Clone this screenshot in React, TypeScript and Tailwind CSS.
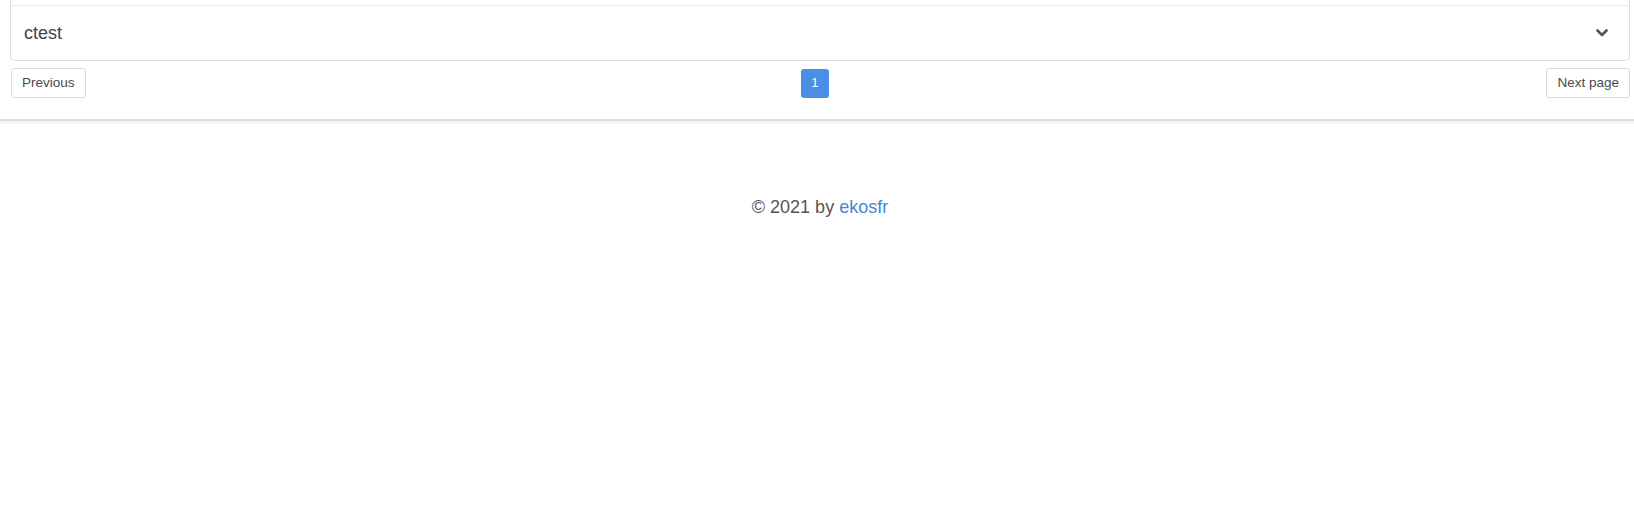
import React from "react";

function Chevron() {
  return (
    <svg width="12" height="8" viewBox="0 0 12 8" className="text-[#555]">
      <path
        d="M1.5 1.5 L6 6 L10.5 1.5"
        fill="none"
        stroke="currentColor"
        strokeWidth="2.6"
        strokeLinecap="round"
        strokeLinejoin="round"
      />
    </svg>
  );
}

function PageButton({ children }: { children: React.ReactNode }) {
  return (
    <button className="h-[30px] px-[10px] rounded-[3px] border border-[#dcdcdc] bg-white text-[13.5px] text-[#4a4a4a]">
      {children}
    </button>
  );
}

export default function App() {
  return (
    <div
      className="w-full h-[512px] bg-white"
      style={{ fontFamily: '"Liberation Sans", Arial, sans-serif' }}
    >
      <div className="border-b-2 border-[#dedede]">
        <div className="pl-[10px] pr-[4px]">
          <div className="border-x border-b border-[#dedede] rounded-b-[5px]">
            <div className="h-[5px]" />
            <div className="h-[55px] border-t border-[#ececec] flex items-center justify-between pl-[13px] pr-[21px]">
              <span className="text-[18px] text-[#444]">ctest</span>
              <Chevron />
            </div>
          </div>
        </div>

        <div className="flex items-center justify-between pl-[11px] pr-[4px] pt-[7px] pb-[21px]">
          <PageButton>Previous</PageButton>
          <button className="h-[29px] w-[28px] rounded-[3px] bg-[#4a8ee6] text-white text-[13px] ml-[-2px]">
            1
          </button>
          <PageButton>Next page</PageButton>
        </div>
      </div>
      <div className="h-[3px] bg-[#f3f3f3]" />

      <div className="pt-[70px] pl-[6px] text-center text-[18px] leading-[27px] text-[#555]">
        © 2021 by <a className="text-[#4a86d0]">ekosfr</a>
      </div>
    </div>
  );
}
